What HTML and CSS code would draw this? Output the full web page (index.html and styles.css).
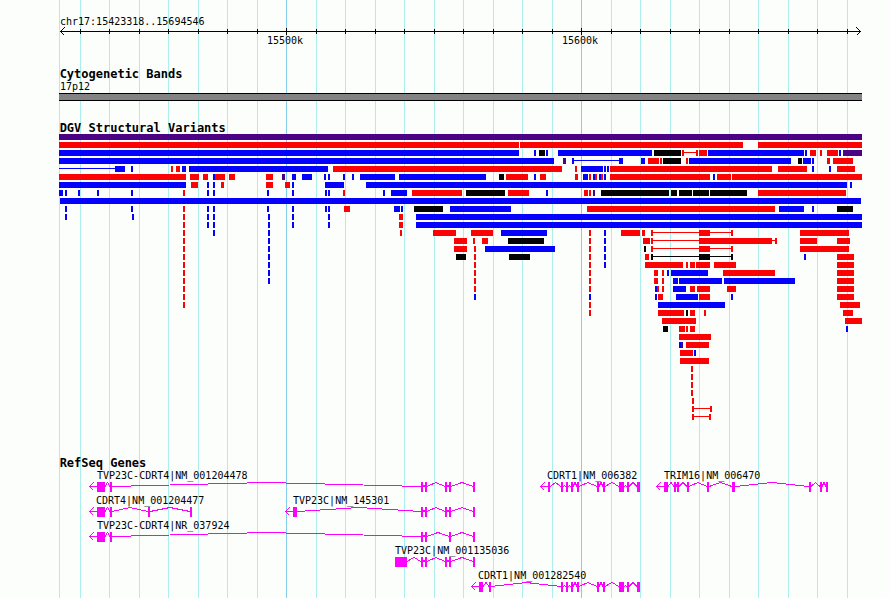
FILE: index.html
```html
<!DOCTYPE html>
<html lang="en">
<head>
<meta charset="utf-8">
<title>chr17:15423318..15694546</title>
<link rel="stylesheet" href="styles.css">
</head>
<body>
<main class="browser">
  <svg class="grid" id="grid" viewBox="0 0 890 598" preserveAspectRatio="none" aria-hidden="true"></svg>
  <section class="track">
    <svg class="plot" viewBox="0 0 890 67" role="img" aria-label="Scale">
      <text class="label" x="60" y="25">chr17:15423318..15694546</text>
      <path class="axis" d="M60 31.5H861M64.5 27.5L60.5 31.5L64.5 35.5M856.5 27.5L860.5 31.5L856.5 35.5"/>
      <g id="ticks"></g>
      <text class="label" x="267" y="44">15500k</text>
      <text class="label" x="562" y="44">15600k</text>
    </svg>
  </section>
  <section class="track">
    <h2 class="title">Cytogenetic Bands</h2>
    <svg class="plot" viewBox="0 0 890 41" role="img" aria-label="Band 17p12">
      <text class="label" x="60" y="10">17p12</text>
      <rect class="band-edge" x="59" y="13" width="803" height="8"/>
      <rect class="band" x="59" y="14" width="803" height="6"/>
    </svg>
  </section>
  <section class="track">
    <h2 class="title">DGV Structural Variants</h2>
    <svg class="plot" id="variants" viewBox="0 0 890 322" role="img" aria-label="Structural variants"></svg>
  </section>
  <section class="track">
    <h2 class="title">RefSeq Genes</h2>
    <svg class="plot" id="genes" viewBox="0 0 890 129"></svg>
  </section>
</main>
<script src="tracks.js"></script>
</body>
</html>
```
FILE: styles.css
```css
body {
  margin: 0;
  background: #fcfefc;
  color: #000;
  font-family: "DejaVu Sans Mono", monospace;
}

.browser {
  position: relative;
}

.grid {
  position: absolute;
  inset: 0;
  width: 100%;
  height: 100%;
  shape-rendering: crispEdges;
}

.track {
  position: relative;
}

.title {
  margin: 0;
  padding-top: 1px;
  padding-left: 6.7%;
  font-size: 12px;
  line-height: 12px;
  font-weight: bold;
}

.plot {
  display: block;
  width: 100%;
  height: auto;
  shape-rendering: crispEdges;
}

.label {
  font-size: 10px;
  white-space: pre;
}

.minor { fill: #aceeec; }
.major { fill: #84ceec; }
.axis { fill: none; stroke: #000; }
.band-edge { fill: #000; }
.band { fill: #848284; }

.r { fill: #fc0204; }
.b { fill: #0402fc; }
.k { fill: #040204; }
.p { fill: #4c0284; }

.exon { fill: #fc02fc; }
.intron { fill: none; stroke: #fc02fc; }
```
FILE: tracks.js
```js
const NS = "http://www.w3.org/2000/svg";

function add(parent, name, attrs, text) {
  const node = document.createElementNS(NS, name);
  for (const key in attrs) node.setAttribute(key, attrs[key]);
  if (text) node.textContent = text;
  parent.appendChild(node);
}

function box(parent, cls, x, y, width, height) {
  add(parent, "rect", { class: cls, x, y, width, height });
}

// Grid lines every 10 kb; every tenth one is major.
const lines = [59, 80, 109, 139, 168, 198, 227, 257, 286, 316, 345, 375, 404, 434,
  463, 493, 522, 552, 581, 611, 640, 670, 699, 729, 758, 788, 817, 847];
const grid = document.getElementById("grid");
const ticks = document.getElementById("ticks");
lines.forEach((x, i) => {
  const major = x === 286 || x === 581;
  box(grid, major ? "major" : "minor", x, 0, 1, 598);
  if (i > 0) box(ticks, "k", x, major ? 28 : 29, 1, major ? 7 : 5);
});

// One string per row: colour, start-end for a bar, start~end for a connector.
const rows = [
  "p59-862",
  "r59-519 r520-743 r758-862",
  "b59-519 b534-536 k539-545 b546-548 b558-652 k654-681 r682-684 r684~696 r696-698 r699-707 b708-804 b805-807 r810-816 r820-822 r827-838 b839-841 p843-862",
  "b59-554 p563-566 b572-574 b574~619 b619-623 b641-645 r648-659 r660-662 k663-681 r686-688 b689-791 k798-802 b803-811 b812-814 r827-830 r833-853",
  "b59~115 b115-125 b131-133 r171-173 r176-180 b182-186 b189-328 r333-562 r575-577 b581-603 b604-606 b607-609 r610-772 r778-807 b812-814 b829-831 r837-855",
  "r59-186 r190-199 r203-208 b213-215 r215-225 r229-235 r266-273 p282-285 b292-296 b302-312 b324-326 b328-330 b343-345 b352-354 b360-395 b399-486 k499-504 r506-528 b534-536 r540-546 r575-578 b583-588 r589-591 b593-595 r595-597 b599-601 r601-603 b604-606 r610-710 b713-715 r717-731 r732-862",
  "b59-186 r191-198 b207-209 b213-215 r221-224 r266-273 r285-290 b292-294 b325-344 b366-847 b850-852",
  "b59-63 b65-67 b78-80 b97-99 b131-133 r183-185 b207-209 b213-215 b267-269 b292-294 b325-327 b328-330 r343-345 b383-385 b391-407 r412-462 k466-505 r508-529 b546-548 r584-588 r589-591 p593-595 k601-669 k671-677 k679-692 k693-709 k710-747 r758-846",
  "b60-861",
  "b65-67 b131-133 r183-185 b207-209 b213-215 b267-269 b292-294 b325-327 b328-330 r344-350 b394-400 b401-403 k414-443 b450-511 r587-775 b779-804 b812-814 k837-853",
  "b65-67 b132-134 r183-185 b207-209 b213-215 b268-270 b292-294 b328-330 r399-403 b416-862",
  "r183-185 b207-209 b213-215 b268-270 b292-294 b328-330 r399-403 b416-862",
  "r183-185 b213-215 b268-270 r400-402 r433-456 r471-493 b501-547 r589-591 b604-606 r621-640 r642-645 r651-653 r653~699 r699-710 r710~731 r731-733 r800-849",
  "r183-185 b268-270 r454-467 r473-475 r482-488 k508-544 r589-591 b604-606 r643-650 r651-653 r653~699 r699-772 r772~775 r775-777 r800-817 r837-850",
  "r183-185 b268-270 r454-467 r474-476 b485-555 r589-591 b604-606 k644-646 r651-653 r653~699 r699-710 r710~731 r731-733 r800-849",
  "r183-185 b268-270 k456-466 r474-476 k509-530 r589-591 b604-606 r645-649 k651-653 k653~699 k699-710 k710~731 k731-733 b804-806 r837-854",
  "r183-185 b268-270 r474-476 r589-591 b604-606 r645-683 r686-688 r690-695 r696-710 r714-736 r837-854",
  "r183-185 b268-270 r474-476 r589-591 r654-658 r662-664 b667-669 b671-708 r723-775 r837-854",
  "r183-185 b268-270 r474-476 r589-591 r654-658 r662-664 b673-678 b679-722 b724-795 r837-854",
  "r183-185 r474-476 r589-591 b655-657 r657-659 r662-664 b673-686 r690-695 r697-710 r727-736 r837-854",
  "r183-185 b474-476 b589-591 b655-657 r658-663 b676-698 r699-710 b731-733 r837-854",
  "r183-185 r589-591 b658-725 r840-860",
  "r589-591 r658-684 k686-688 r690-695 r704-706 r843-853",
  "r662-696 r845-862",
  "k663-668 r679-685 r686-688 r690-695 b846-848",
  "r679-711",
  "b679-681 p681-683 r686-709",
  "r680-693 b694-696",
  "r680-709",
  "r691-693",
  "r691-693",
  "r691-693",
  "r691-693",
  "r692-694",
  "r692-694 r694~710 r710-712",
  "r692-694 r694~709 r709-711"
];
const variants = document.getElementById("variants");
rows.forEach((row, i) => {
  for (const item of row.split(" ")) {
    const [, colour, start, kind, end] = item.match(/(\w)(\d+)([-~])(\d+)/);
    const thin = kind === "~";
    box(variants, colour, start, i * 8 + (thin ? 2 : 0), end - start, thin ? 1 : 6);
  }
});

// Genes: name, label x, row, arrow tip x (0 for none), exons as [start, end].
const tail = [[421, 423], [425, 427], [445, 447], [449, 451], [473, 475]];
const cdrt = [[561, 563], [566, 568], [571, 573], [577, 579], [597, 599], [603, 605],
  [619, 624], [627, 629], [637, 640]];
const genes = [
  ["TVP23C-CDRT4|NM_001204478", 97, 0, 89, [[97, 105], [110, 112], ...tail]],
  ["CDRT1|NM_006382", 547, 0, 540, [[548, 550], ...cdrt]],
  ["TRIM16|NM_006470", 664, 0, 656, [[664, 668], [674, 676], [677, 679], [687, 689],
    [707, 709], [732, 735], [809, 811], [820, 822], [826, 828]]],
  ["CDRT4|NM_001204477", 96, 1, 89, [[97, 105], [110, 112], [148, 150], [190, 192]]],
  ["TVP23C|NM_145301", 293, 1, 285, [[293, 297], ...tail]],
  ["TVP23C-CDRT4|NR_037924", 97, 2, 89, [[97, 105], [110, 112], [421, 423], [425, 427],
    [449, 451], [473, 475]]],
  ["TVP23C|NM_001135036", 395, 3, 0, [[395, 407], ...tail]],
  ["CDRT1|NM_001282540", 478, 4, 471, [[479, 483], [489, 491], ...cdrt]]
];
const genePlot = document.getElementById("genes");
for (const [name, labelX, row, tip, exons] of genes) {
  const top = 13 + row * 25;
  const mid = top + 4.5;
  let d = "";
  if (tip) {
    d += `M${tip} ${mid}H${exons[0][0]}M${tip + 4.5} ${mid - 4}L${tip + 0.5} ${mid}L${tip + 4.5} ${mid + 4}`;
  }
  exons.forEach(([start, end], i) => {
    box(genePlot, "exon", start, top, end - start, 10);
    if (i === 0) return;
    const from = exons[i - 1][1];
    const rise = start - from < 4 ? 1 : 4;
    d += `M${from} ${mid}L${(from + start) / 2} ${mid - rise}L${start} ${mid}`;
  });
  add(genePlot, "path", { class: "intron", d });
  add(genePlot, "text", { class: "label", x: labelX, y: top - 3 }, name);
}
```
